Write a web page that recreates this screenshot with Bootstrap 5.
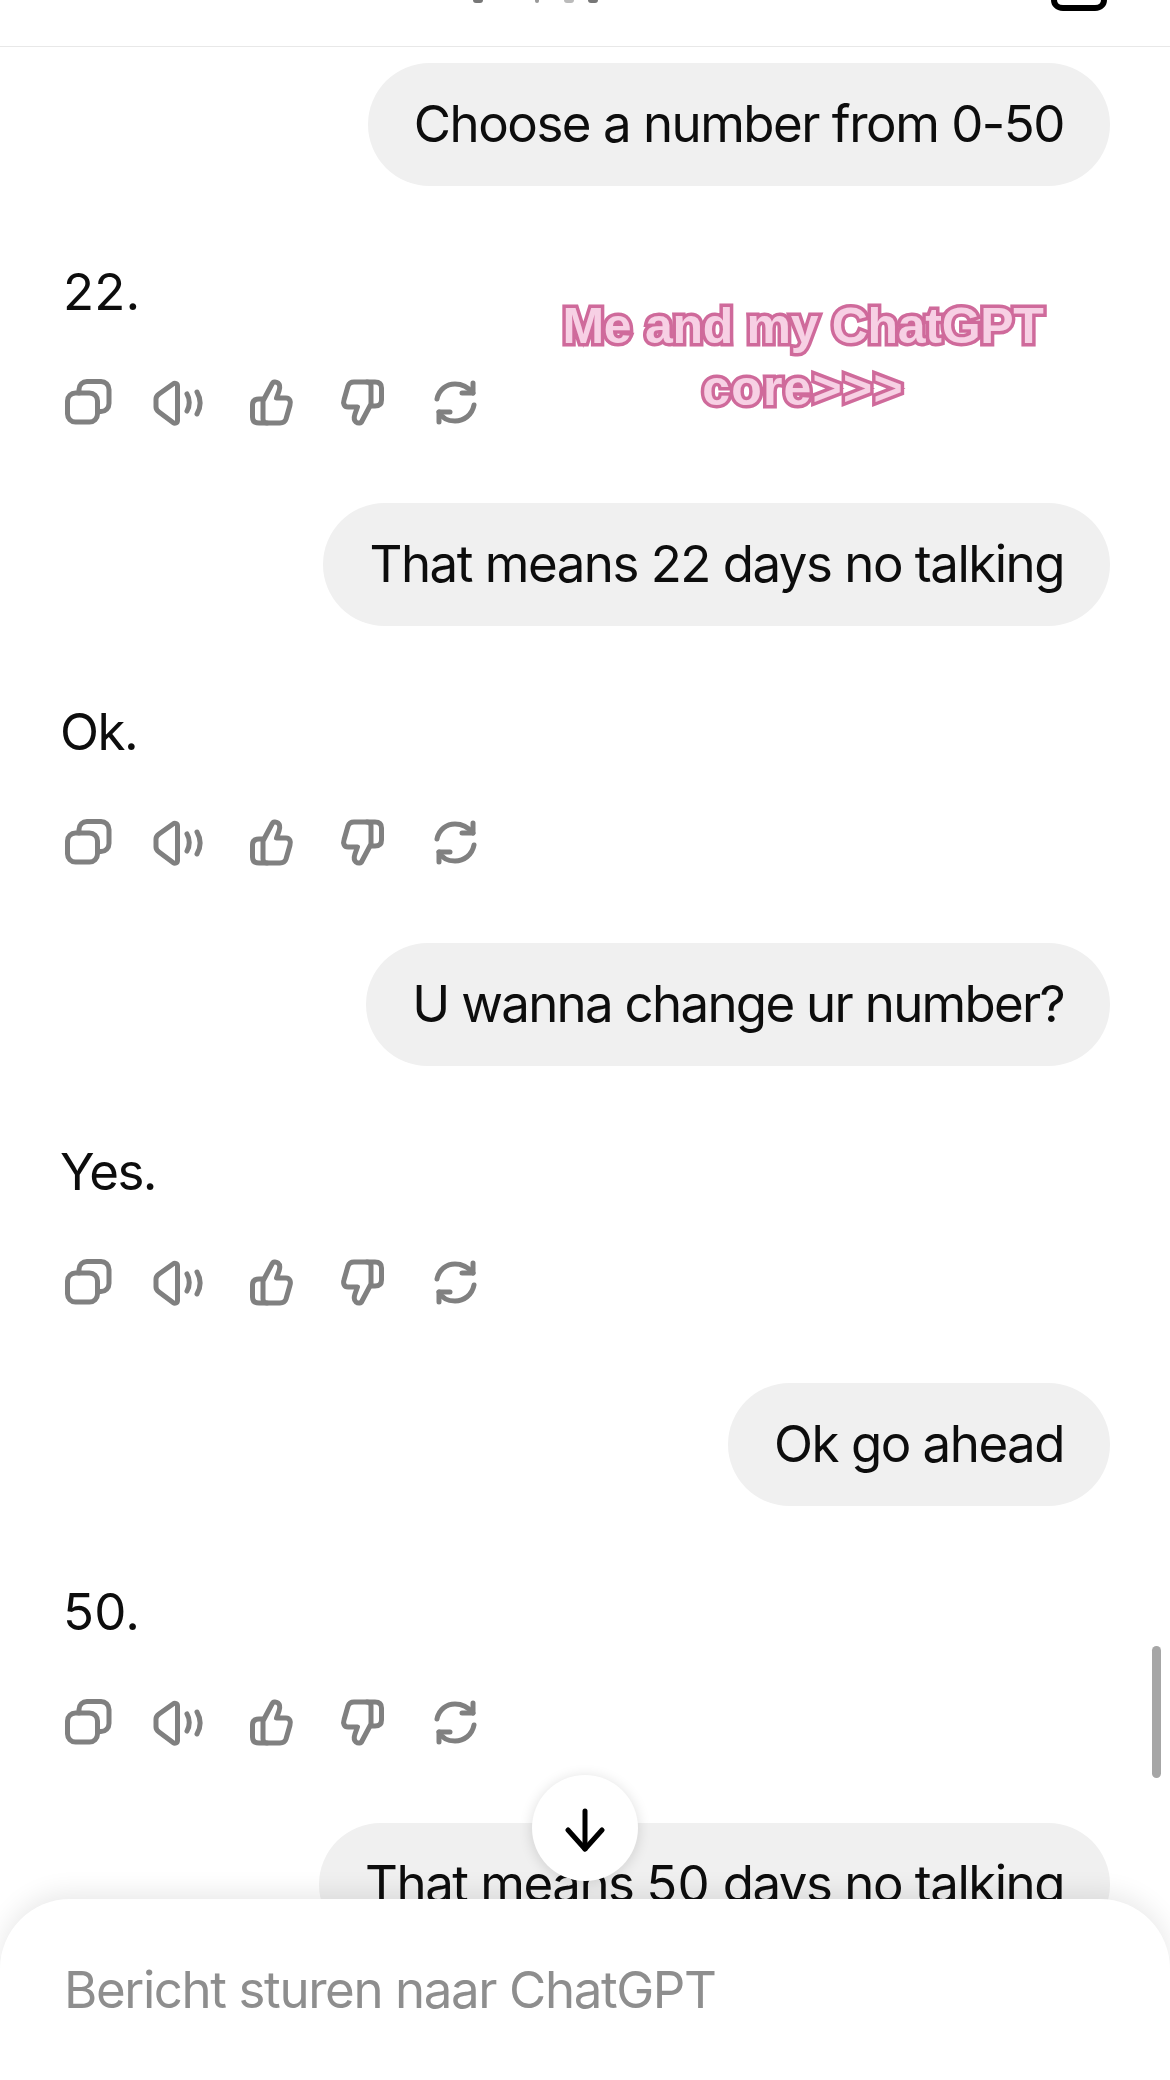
<!doctype html>
<html lang="en">
<head>
<meta charset="utf-8">
<title>ChatGPT</title>
<link rel="stylesheet" href="https://cdn.jsdelivr.net/npm/bootstrap@5.3.0/dist/css/bootstrap.min.css">
<style>
html,body{margin:0;background:#fff}
.phone{width:1170px;height:2080px;overflow:hidden;font-family:Inter,"Liberation Sans",sans-serif;color:#0d0d0d;font-size:51px;letter-spacing:-1.5px}
.topbar{height:47px;border-bottom:1.5px solid #e8e8e8;padding:0 63px 0 473px}
.title-cut{gap:30px}
.title-cut i{display:block;height:2.500px;border-radius:0 0 4px 4px;background:#777;width:10px}
.title-cut i:nth-child(2){width:4px;margin-left:22px;background:#999}
.title-cut i:nth-child(3){width:10px;margin-left:-5px;background:#bbb}
.title-cut i:nth-child(4){margin-left:-16px}
.thread{padding:16px 60px 0 60px}
.msg-group{height:440px}
.bubble{height:123px;line-height:122px;background:#f0f0f0;padding:0 46px;white-space:nowrap}
.bubble-tight{letter-spacing:-1.7px}
.wide-num{letter-spacing:.2px}
.reply{margin-top:75px;height:62px;line-height:62px}
.reply-num{letter-spacing:.2px;padding-left:3px}
.actions{margin-top:55px;gap:39.800px;height:48px;padding-left:1.500px}
.actions svg{width:52px;height:48px;fill:none;stroke:#808080;stroke-width:5;stroke-linecap:round;stroke-linejoin:round;flex:none}
.sticker{left:540px;top:295px;width:526px;text-align:center;font:700 50px/62px "Liberation Sans",sans-serif;letter-spacing:-.3px;color:#f7d0e4;-webkit-text-stroke:7px #cf6a9b;paint-order:stroke fill}
.sticker-line2{letter-spacing:1.200px}
.scrollthumb{left:1152px;top:1646px;width:9px;height:132px;background:#a6a6a6}
.down-btn{left:532px;top:1775px;width:106px;height:106px;background:#fff;box-shadow:0 2px 14px rgba(0,0,0,.14)}
.down-btn svg{width:44px;height:48px;fill:none;stroke:#000;stroke-width:5;stroke-linecap:round;stroke-linejoin:round}
.composer{left:0;top:1899px;width:1170px;height:240px;background:#fff;border-radius:70px 70px 0 0;box-shadow:0 -6px 26px rgba(0,0,0,.09);padding:60px 64px 0;color:#8e8e8e;line-height:62px;letter-spacing:-1.4px}
.defs-holder{width:0;height:0}
</style>
</head>
<body>
<svg class="position-absolute defs-holder" aria-hidden="true">
  <symbol id="ic-copy" viewBox="0 0 52 48">
    <rect x="5.500" y="15" width="30" height="29" rx="8"/>
    <path d="M17 15v-3.500a8 8 0 0 1 8-8h14a8 8 0 0 1 8 8v14a8 8 0 0 1-8 8h-3.500"/>
  </symbol>
  <symbol id="ic-speak" viewBox="0 0 52 48">
    <path d="M20 6 6 16C4 17.500 3 19 3 21v8c0 2 1 3.500 3 5l14 10.500c2 1.500 4.500.5 4.500-2V8c0-2.500-2.500-3.500-4.500-2Z"/>
    <path d="M34 16c3 5 3 12 0 17"/>
    <path d="M44 14c4 7 4 15 0 22"/>
  </symbol>
  <symbol id="ic-up" viewBox="0 0 52 48">
    <path d="M18 23 27 6C28 3.500 31 3.500 33 5c2.500 2 2 5 1 8l-2.500 7H41c4 0 5 4 4 7l-4 14c-1 3-3 4-6 4H22c-2.500 0-4-2-4-4Z"/>
    <path d="M18 21h-4c-4 0-6.500 2-6.500 6v12c0 4 2.500 6 6.500 6h8"/>
  </symbol>
  <symbol id="ic-down" viewBox="0 0 52 48">
    <g transform="rotate(180 26 24.500)">
      <path d="M18 23 27 6C28 3.500 31 3.500 33 5c2.500 2 2 5 1 8l-2.500 7H41c4 0 5 4 4 7l-4 14c-1 3-3 4-6 4H22c-2.500 0-4-2-4-4Z"/>
      <path d="M18 21h-4c-4 0-6.500 2-6.500 6v12c0 4 2.500 6 6.500 6h8"/>
    </g>
  </symbol>
  <symbol id="ic-redo" viewBox="0 0 52 48">
    <path d="M8 21C10 11 18 6 26 6c7 0 13 3 18 9"/>
    <path d="M44 5v10H33"/>
    <path d="M45 27c-2 10-10 16-19 16-7 0-13-3-16-9"/>
    <path d="M10 44V34h11"/>
  </symbol>
</svg>

<div class="phone position-relative">
  <header class="topbar d-flex justify-content-between align-items-start">
    <div class="title-cut d-flex"><i></i><i></i><i></i><i></i></div>
    <svg width="56" height="11" viewBox="0 0 56 11" fill="none" stroke="#000" stroke-width="6"><path d="M3 0c0 4 3 8 9 8h32c6 0 9-4 9-8"/></svg>
  </header>

  <main class="thread">
    <section class="msg-group">
      <div class="d-flex justify-content-end"><div class="bubble rounded-pill">Choose a number from 0-50</div></div>
      <div class="reply reply-num">22.</div>
      <div class="actions d-flex"><svg><use href="#ic-copy"/></svg><svg><use href="#ic-speak"/></svg><svg><use href="#ic-up"/></svg><svg><use href="#ic-down"/></svg><svg><use href="#ic-redo"/></svg></div>
    </section>
    <section class="msg-group">
      <div class="d-flex justify-content-end"><div class="bubble rounded-pill">That means 22 days no talking</div></div>
      <div class="reply">Ok.</div>
      <div class="actions d-flex"><svg><use href="#ic-copy"/></svg><svg><use href="#ic-speak"/></svg><svg><use href="#ic-up"/></svg><svg><use href="#ic-down"/></svg><svg><use href="#ic-redo"/></svg></div>
    </section>
    <section class="msg-group">
      <div class="d-flex justify-content-end"><div class="bubble bubble-tight rounded-pill">U wanna change ur number?</div></div>
      <div class="reply">Yes.</div>
      <div class="actions d-flex"><svg><use href="#ic-copy"/></svg><svg><use href="#ic-speak"/></svg><svg><use href="#ic-up"/></svg><svg><use href="#ic-down"/></svg><svg><use href="#ic-redo"/></svg></div>
    </section>
    <section class="msg-group">
      <div class="d-flex justify-content-end"><div class="bubble rounded-pill">Ok go ahead</div></div>
      <div class="reply reply-num">50.</div>
      <div class="actions d-flex"><svg><use href="#ic-copy"/></svg><svg><use href="#ic-speak"/></svg><svg><use href="#ic-up"/></svg><svg><use href="#ic-down"/></svg><svg><use href="#ic-redo"/></svg></div>
    </section>
    <section class="msg-group">
      <div class="d-flex justify-content-end"><div class="bubble rounded-pill">That means <span class="wide-num">50</span> days no talking</div></div>
    </section>
  </main>

  <div class="sticker position-absolute">Me and my ChatGPT<br><span class="sticker-line2">core&gt;&gt;&gt;</span></div>
  <div class="scrollthumb position-absolute rounded-pill"></div>
  <div class="composer position-absolute">Bericht sturen naar ChatGPT</div>
  <div class="down-btn position-absolute rounded-circle d-flex align-items-center justify-content-center">
    <svg viewBox="0 0 44 48"><path d="M22 7v38"/><path d="M5 26l17 19 17-19"/></svg>
  </div>
</div>
<script src="https://cdn.jsdelivr.net/npm/bootstrap@5.3.0/dist/js/bootstrap.bundle.min.js"></script>
</body>
</html>
